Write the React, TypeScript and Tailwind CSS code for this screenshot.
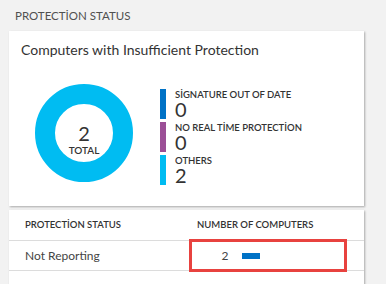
const font = { fontFamily: 'Lato, "Open Sans", sans-serif' };

const legend = [
  { label: "SİGNATURE OUT OF DATE", value: 0, color: "bg-[#0072c6]" },
  { label: "NO REAL TİME PROTECTİON", value: 0, color: "bg-[#9b4f96]" },
  { label: "OTHERS", value: 2, color: "bg-[#00bcf2]" },
];

export default function App() {
  return (
    <div
      className="h-[284px] w-[386px] overflow-hidden bg-[#f2f2f2] text-[#333]"
      style={font}
    >
      <div className="px-[15px] pt-[9px] text-[11.5px] leading-[14px] text-[#505050]">
        PROTECTİON STATUS
      </div>

      <section className="mx-[9px] mt-[8px] h-[175px] w-[355px] bg-white shadow-[1px_1px_2px_rgba(0,0,0,0.3)]">
        <h2 className="px-[12px] pt-[9px] text-[14px] leading-[20px] text-[#333]">
          Computers with Insufficient Protection
        </h2>
        <div className="mt-[24px] flex items-start pl-[26px]">
          <div className="flex h-[98px] w-[98px] shrink-0 flex-col items-center rounded-full border-[20px] border-[#00bcf2] pt-[19px]">
            <span className="text-[20px] leading-[20px] text-[#333]">2</span>
            <span className="mt-[1px] text-[10px] leading-[12px] font-semibold text-[#333]">TOTAL</span>
          </div>
          <div className="ml-[27px] mt-[5px] grid gap-[3px]">
            {legend.map((item) => (
              <div key={item.label} className="flex h-[30px] items-stretch gap-[9px]">
                <span className={`w-[6px] ${item.color}`} />
                <div className="flex flex-col">
                  <span className="text-[9.5px] leading-[11px] font-semibold text-[#333]">
                    {item.label}
                  </span>
                  <span className="text-[20px] leading-[19px] text-[#333]">
                    {item.value}
                  </span>
                </div>
              </div>
            ))}
          </div>
        </div>
      </section>

      <section className="mx-[9px] mt-[4px] h-[80px] w-[355px] bg-white shadow-[1px_1px_2px_rgba(0,0,0,0.3)]">
        <div className="flex h-[31px] items-center border-b border-[#dcdcdc] text-[9.5px] font-semibold text-[#333]">
          <span className="w-[188px] pl-[16px]">PROTECTİON STATUS</span>
          <span>NUMBER OF COMPUTERS</span>
        </div>
        <div className="relative flex h-[30px] items-center border-b border-[#dcdcdc] text-[12px] text-[#444]">
          <span className="w-[188px] pl-[16px]">Not Reporting</span>
          <span className="flex items-center pl-[23px]">
            <span className="w-[10px] text-center">2</span>
            <span className="ml-[12px] h-[6px] w-[18px] bg-[#0072c6]" />
          </span>
          <div className="absolute left-[180px] top-[-2px] h-[33px] w-[158px] border-[3px] border-[#e8423f]" />
        </div>
      </section>
    </div>
  );
}
